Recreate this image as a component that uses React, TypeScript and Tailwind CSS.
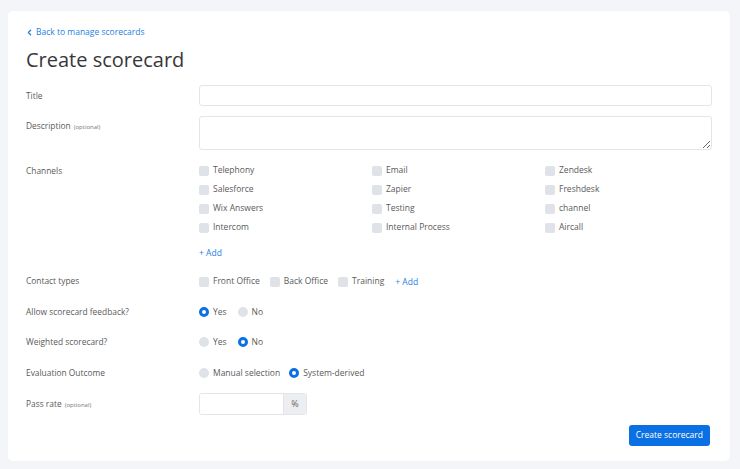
import { ChevronLeft } from 'lucide-react';

const channels = [
  ['Telephony', 'Email', 'Zendesk'],
  ['Salesforce', 'Zapier', 'Freshdesk'],
  ['Wix Answers', 'Testing', 'channel'],
  ['Intercom', 'Internal Process', 'Aircall'],
];

function Checkbox({ label }: { label: string }) {
  return (
    <label className="flex items-center gap-[4px]">
      <span className="w-[10px] h-[10px] rounded-[2px] bg-[#dfe2e7] shrink-0" />
      <span>{label}</span>
    </label>
  );
}

function Radio({ label, checked }: { label: string; checked?: boolean }) {
  return (
    <label className="flex items-center gap-[4px]">
      {checked ? (
        <span className="w-[10px] h-[10px] rounded-full border-[3px] border-[#0b70e4] bg-white shrink-0" />
      ) : (
        <span className="w-[10px] h-[10px] rounded-full bg-[#dfe2e7] shrink-0" />
      )}
      <span>{label}</span>
    </label>
  );
}

function Label({ children, optional }: { children: string; optional?: boolean }) {
  return (
    <div className="w-[173px] shrink-0 text-[8.4px] text-[#5a5a5a]">
      {children}
      {optional && <span className="text-[6px] text-[#777] ml-[3px]">(optional)</span>}
    </div>
  );
}

export default function App() {
  return (
    <div
      className="min-h-[469px] bg-[#f3f5f9] pt-[11px] px-[8px] pb-[8px] text-[#5a5a5a]"
      style={{ fontFamily: '"Open Sans", sans-serif' }}
    >
      <div className="bg-white rounded-[5px] h-[450px] w-[722px] pl-[18px] pr-[18px] pt-[16px]">
        {/* Back link */}
        <a className="flex items-center gap-[2px] text-[8.5px] text-[#1d7fe2] h-[11px]">
          <ChevronLeft className="w-[9px] h-[9px] -ml-[1px]" strokeWidth={3.5} />
          Back to manage scorecards
        </a>
        <h1 className="text-[20px] font-medium text-[#383838] leading-[26px] mt-[9px]">Create scorecard</h1>

        {/* Title */}
        <div className="flex items-center mt-[12px]">
          <div className="pt-[1px]">
            <Label>Title</Label>
          </div>
          <div className="flex-1 h-[21px] border border-[#e3e5e8] rounded-[3px]" />
        </div>

        {/* Description */}
        <div className="flex items-start mt-[10px]">
          <div className="pt-[4px]">
            <Label optional>Description</Label>
          </div>
          <textarea className="flex-1 h-[34px] border border-[#e3e5e8] rounded-[3px] resize-y" />
        </div>

        {/* Channels */}
        <div className="flex items-start mt-[11px] text-[8.5px]">
          <div className="pt-[4px]">
            <Label>Channels</Label>
          </div>
          <div className="flex-1">
            {channels.map((row) => (
              <div key={row[0]} className="flex h-[19px] items-center">
                {row.map((c) => (
                  <div key={c} className="w-[173px]">
                    <Checkbox label={c} />
                  </div>
                ))}
              </div>
            ))}
            <div className="text-[#1d7fe2] mt-[9px] leading-[14px]">+ Add</div>
          </div>
        </div>

        {/* Contact types */}
        <div className="flex items-center mt-[12px] h-[19px] text-[8.5px]">
          <Label>Contact types</Label>
          <div className="flex items-center gap-[10px]">
            <Checkbox label="Front Office" />
            <Checkbox label="Back Office" />
            <Checkbox label="Training" />
            <span className="text-[#1d7fe2] ml-[1px] mt-[1px]">+ Add</span>
          </div>
        </div>

        <div className="flex items-center mt-[11px] h-[20px] text-[8.5px]">
          <Label>Allow scorecard feedback?</Label>
          <div className="flex items-center gap-[11px]">
            <Radio label="Yes" checked />
            <Radio label="No" />
          </div>
        </div>

        <div className="flex items-center mt-[10px] h-[20px] text-[8.5px]">
          <Label>Weighted scorecard?</Label>
          <div className="flex items-center gap-[11px]">
            <Radio label="Yes" />
            <Radio label="No" checked />
          </div>
        </div>

        <div className="flex items-center mt-[11px] h-[20px] text-[8.5px]">
          <Label>Evaluation Outcome</Label>
          <div className="flex items-center gap-[9px]">
            <Radio label="Manual selection" />
            <Radio label="System-derived" checked />
          </div>
        </div>

        <div className="flex items-center mt-[10px]">
          <Label optional>Pass rate</Label>
          <div className="flex h-[22px] w-[108px] border border-[#e3e5e8] rounded-[3px] overflow-hidden">
            <div className="flex-1 bg-white" />
            <div className="w-[23px] bg-[#eceef2] border-l border-[#e3e5e8] flex items-center justify-center text-[9px] text-[#666]">
              %
            </div>
          </div>
        </div>

        <div className="flex justify-end mt-[10px] pr-[2px]">
          <button className="h-[21px] px-[7px] bg-[#0b70e4] text-white text-[8.5px] rounded-[3px]">
            Create scorecard
          </button>
        </div>
      </div>
    </div>
  );
}
